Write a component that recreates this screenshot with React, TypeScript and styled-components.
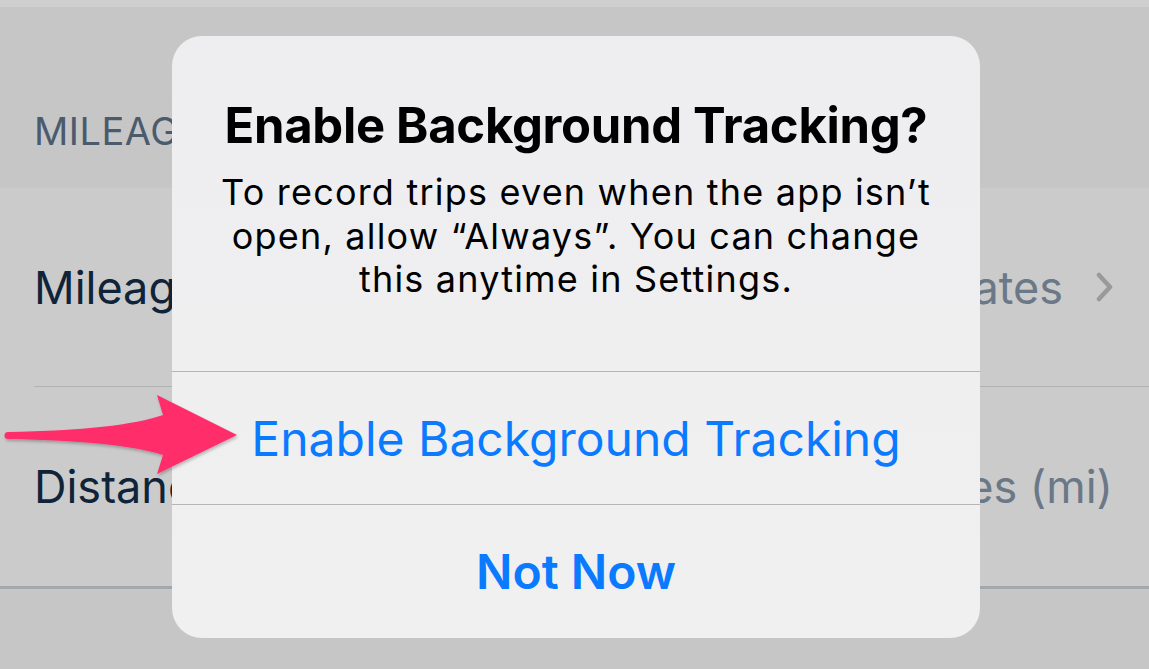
import React from "react";
import styled, { createGlobalStyle } from "styled-components";

const Global = createGlobalStyle`
  html, body { margin: 0; padding: 0; }
  body { font-family: Inter, "Noto Sans", sans-serif; background: #c6c6c6; }
`;

const Page = styled.div`
  position: relative;
  width: 1149px;
  height: 669px;
  overflow: hidden;
  background: #c6c6c6;
  display: flex;
  flex-direction: column;
`;

const TopStrip = styled.div`
  height: 7px;
  background: #cfcfcf;
`;

const SectionHeader = styled.div`
  height: 181px;
  box-sizing: border-box;
  background: #c6c6c6;
  display: flex;
  align-items: flex-end;
  padding: 0 0 34px 34px;
  font-size: 38px;
  letter-spacing: 0.5px;
  color: #4b5a6d;
  line-height: 46px;
`;

const List = styled.div`
  background: #cbcbcb;
  border-bottom: 3px solid #a4a7ab;
  padding-left: 34px;
`;

const Row = styled.div<{ $last?: boolean }>`
  height: 199px;
  box-sizing: border-box;
  display: flex;
  align-items: center;
  justify-content: space-between;
  padding-right: 36px;
  border-bottom: ${(p) => (p.$last ? "none" : "1px solid #b2b2b2")};
`;

const RowLabel = styled.span`
  font-size: 45px;
  color: #0f2339;
`;

const RowValue = styled.span`
  display: flex;
  align-items: center;
  gap: 33px;
  font-size: 45px;
  color: #6a7887;
`;

const Dialog = styled.div`
  position: absolute;
  left: 172px;
  top: 36px;
  width: 808px;
  height: 602px;
  border-radius: 30px;
  background: linear-gradient(180deg, #eeeef0 0%, #f0f0f0 100%);
  display: flex;
  flex-direction: column;
  overflow: hidden;
`;

const DialogBody = styled.div`
  height: 336px;
  box-sizing: border-box;
  padding: 62px 40px 0;
  text-align: center;
  color: #000;
`;

const Title = styled.div`
  font-size: 49px;
  font-weight: 700;
  line-height: 56px;
  letter-spacing: -0.3px;
`;

const Message = styled.div`
  margin: 17px auto 0;
  width: 724px;
  font-size: 36px;
  line-height: 43.5px;
  letter-spacing: 1.2px;
`;

const ActionButton = styled.div<{ $bold?: boolean }>`
  height: 133px;
  border-top: 1px solid #b5b5b5;
  display: flex;
  align-items: center;
  justify-content: center;
  color: #0a7aff;
  font-size: 48px;
  font-weight: ${(p) => (p.$bold ? 600 : 400)};
`;

const Arrow = styled.svg`
  position: absolute;
  left: 0;
  top: 380px;
  width: 250px;
  height: 110px;
  overflow: visible;
`;

export default function App() {
  return (
    <>
      <Global />
      <Page>
        <TopStrip />
        <SectionHeader>MILEAGE TRACKING</SectionHeader>
        <List>
          <Row>
            <RowLabel>Mileage Rate</RowLabel>
            <RowValue>
              IRS Standard Rates
              <svg width="17" height="30" viewBox="0 0 17 30">
                <path d="M3 3 L14 15 L3 27" fill="none" stroke="#9a9a9a" strokeWidth="4.5" strokeLinecap="round" strokeLinejoin="round" />
              </svg>
            </RowValue>
          </Row>
          <Row $last>
            <RowLabel>Distance Unit</RowLabel>
            <RowValue>Miles (mi)</RowValue>
          </Row>
        </List>
        <Dialog>
          <DialogBody>
            <Title>Enable Background Tracking?</Title>
            <Message>
              To record trips even when the app isn’t open, allow “Always”. You can change this anytime in Settings.
            </Message>
          </DialogBody>
          <ActionButton>Enable Background Tracking</ActionButton>
          <ActionButton $bold>Not Now</ActionButton>
        </Dialog>
        <Arrow viewBox="0 380 250 110">
          <defs>
            <filter id="sh" x="-10%" y="-20%" width="120%" height="140%">
              <feDropShadow dx="1" dy="2" stdDeviation="1.5" floodColor="#000" floodOpacity="0.25" />
            </filter>
          </defs>
          <path
            d="M 8 432 Q 120 430 163 415 L 157 395 L 237 435 L 157 474 L 163 455 Q 120 441 8 439 A 3.5 3.5 0 0 1 8 432 Z"
            fill="#ff2d6b"
            filter="url(#sh)"
          />
        </Arrow>
      </Page>
    </>
  );
}
